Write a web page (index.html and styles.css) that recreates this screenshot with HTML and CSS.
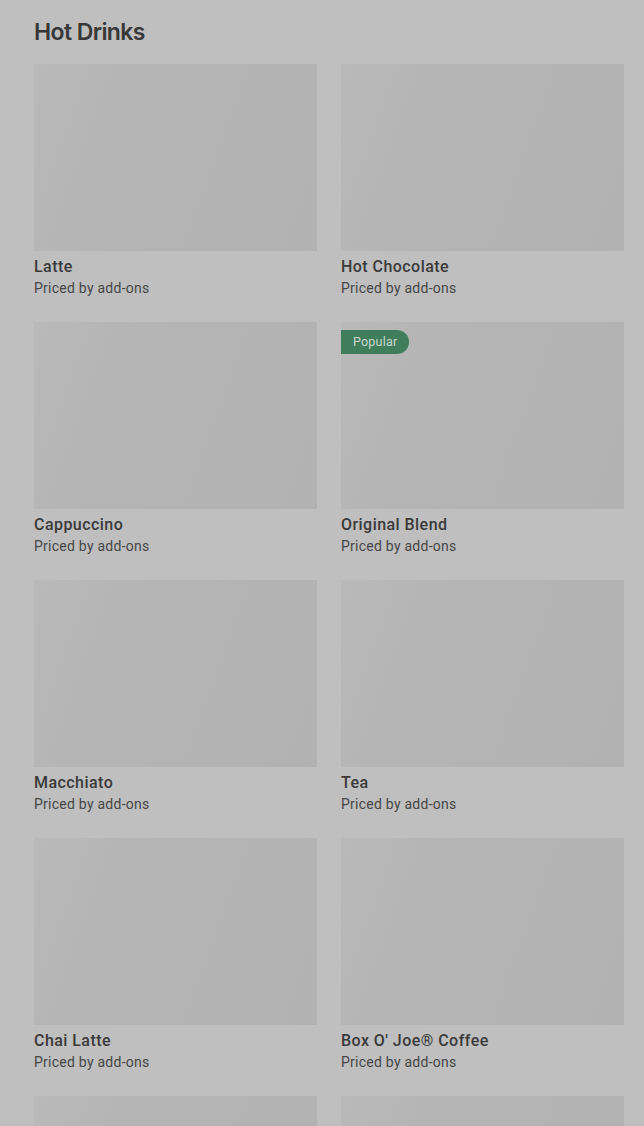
FILE: index.html
```html
<!DOCTYPE html>
<html lang="en">
<head>
<meta charset="utf-8">
<title>Hot Drinks</title>
<link rel="stylesheet" href="styles.css">
</head>
<body>
<main class="section">
  <h2 class="heading">Hot Drinks</h2>
  <div class="grid">
    <div class="card"><div class="thumb"></div><div class="name">Latte</div><div class="price">Priced by add-ons</div></div>
    <div class="card"><div class="thumb"></div><div class="name">Hot Chocolate</div><div class="price">Priced by add-ons</div></div>
    <div class="card"><div class="thumb"></div><div class="name">Cappuccino</div><div class="price">Priced by add-ons</div></div>
    <div class="card"><div class="thumb"><span class="badge">Popular</span></div><div class="name">Original Blend</div><div class="price">Priced by add-ons</div></div>
    <div class="card"><div class="thumb"></div><div class="name">Macchiato</div><div class="price">Priced by add-ons</div></div>
    <div class="card"><div class="thumb"></div><div class="name">Tea</div><div class="price">Priced by add-ons</div></div>
    <div class="card"><div class="thumb"></div><div class="name">Chai Latte</div><div class="price">Priced by add-ons</div></div>
    <div class="card"><div class="thumb"></div><div class="name">Box O' Joe® Coffee</div><div class="price">Priced by add-ons</div></div>
    <div class="card"><div class="thumb"></div></div>
    <div class="card"><div class="thumb"></div></div>
  </div>
</main>
</body>
</html>
```

FILE: styles.css
```css
html, body {
  margin: 0;
  padding: 0;
  background: #bfbfbf;
}
body {
  font-family: Roboto, "Liberation Sans", sans-serif;
  color: #363636;
}
.section {
  padding: 16px 20px 0 34px;
}
.heading {
  margin: 0 0 16px 0;
  font-family: Inter, "Liberation Sans", sans-serif;
  font-size: 23px;
  line-height: 32px;
  font-weight: 600;
  letter-spacing: -0.6px;
  color: #383838;
}
.grid {
  display: grid;
  grid-template-columns: 283px 283px;
  column-gap: 24px;
  row-gap: 24px;
}
.card {
  display: flex;
  flex-direction: column;
}
.thumb {
  position: relative;
  height: 187px;
  background: linear-gradient(110deg, #b9b9b9 0%, #b4b4b4 35%, #b2b2b2 100%);
}
.badge {
  position: absolute;
  top: 8px;
  left: 0;
  height: 24px;
  line-height: 24px;
  padding: 0 12px 0 12px;
  background: #3f7d5b;
  color: #c9d9ce;
  font-size: 12.5px;
  letter-spacing: 0.2px;
  border-radius: 0 12px 12px 0;
}
.name {
  margin-top: 5px;
  font-size: 16px;
  line-height: 22px;
  font-weight: 500;
  letter-spacing: 0.45px;
  color: #3a3a3a;
}
.price {
  font-size: 14px;
  line-height: 20px;
  letter-spacing: 0.25px;
  color: #464646;
}
```
